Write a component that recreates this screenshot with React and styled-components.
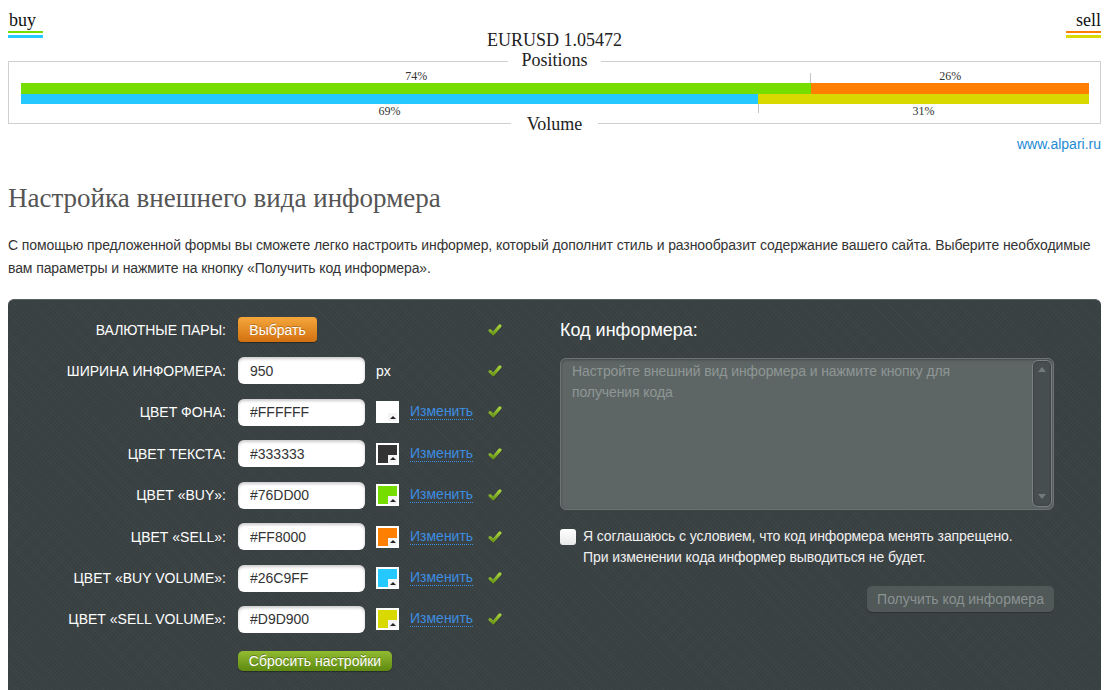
import React from 'react';
import styled, { createGlobalStyle } from 'styled-components';

const GlobalStyle = createGlobalStyle`
  html, body { margin: 0; padding: 0; background: #fff; overflow: hidden; }
  body { padding: 8px 5px 0 8px; font-family: "Liberation Sans", Arial, sans-serif; }
  * { box-sizing: border-box; }
`;

/* ---------- Informer preview ---------- */
const Header = styled.header`
  display: flex;
  justify-content: space-between;
  align-items: flex-start;
  padding-top: 2px;
`;
const Side = styled.div`
  width: 35px;
  display: flex;
  flex-direction: column;
  align-items: ${(p) => (p.$right ? 'flex-end' : 'flex-start')};
`;
const SideName = styled.span`
  font: 18px/21px "Liberation Serif", "Times New Roman", serif;
  color: #111;
  padding-left: ${(p) => (p.$right ? 0 : 1)}px;
`;
const Stripe = styled.div`
  align-self: stretch;
  height: ${(p) => p.$h}px;
  margin-top: ${(p) => p.$mt}px;
  background: ${(p) => p.$color};
`;
const Pair = styled.div`
  font: 18px/18px "Liberation Serif", "Times New Roman", serif;
  color: #222;
  margin-top: 21px;
`;

const Rule = styled.div`
  display: flex;
  height: 20px;
  font: 18px/20px "Liberation Serif", "Times New Roman", serif;
  color: #222;
`;
const RuleLine = styled.div`
  flex: 1;
  border: 0 solid #cfcfcf;
  ${(p) => (p.$right ? 'border-right-width: 1px;' : 'border-left-width: 1px;')}
  ${(p) =>
    p.$bottom
      ? 'align-self: flex-start; height: 10px; border-bottom-width: 1px;'
      : 'margin-top: 12px; border-top-width: 1px;'}
`;
const RuleText = styled.span`
  padding: ${(p) => (p.$bottom ? '0' : '1px')} ${(p) => p.$pad || 13}px 0;
`;
const FrameBody = styled.div`
  border-left: 1px solid #cfcfcf;
  border-right: 1px solid #cfcfcf;
  padding: 0 11px 0 12px;
`;
const BarRow = styled.div`
  display: flex;
`;
const Segment = styled.div`
  display: flex;
  flex-direction: column;
`;
const Pct = styled.div`
  height: ${(p) => p.$h}px;
  line-height: 14px;
  font-size: 12px;
  font-family: "Liberation Serif", "Times New Roman", serif;
  color: #333;
  text-align: center;
  white-space: nowrap;
  background: ${(p) =>
    p.$marker
      ? `linear-gradient(#c4c4c4, #c4c4c4) ${p.$marker} / 1px ${p.$mh}px no-repeat`
      : 'none'};
`;
const Bar = styled.div`
  height: ${(p) => p.$h}px;
  background: ${(p) => p.$color};
`;
const SiteLink = styled.a`
  display: block;
  margin-top: 2.5px;
  text-align: right;
  font: 14px/16px "Liberation Sans", Arial, sans-serif;
  color: #1d8ad2;
  text-decoration: none;
`;

/* ---------- Intro ---------- */
const Title = styled.h1`
  margin: 29.5px 0 0;
  font: normal 27px/32px "Liberation Serif", Georgia, serif;
  color: #555;
`;
const Intro = styled.p`
  margin: 20.5px 0 0;
  font: 14px/23px "Liberation Sans", Arial, sans-serif;
  letter-spacing: -0.1px;
  color: #333;
`;

/* ---------- Settings panel ---------- */
const Panel = styled.div`
  margin-top: 18.5px;
  display: flex;
  padding: 16.5px 46px 40px 0;
  border-top: 1px solid #5a6163;
  border-radius: 6px 6px 0 0;
  background-color: #3a4143;
  background-image: repeating-linear-gradient(45deg, rgba(255,255,255,0.018) 0 1px, transparent 1px 3px),
    repeating-linear-gradient(-45deg, rgba(0,0,0,0.03) 0 1px, transparent 1px 3px);
`;
const Form = styled.div`
  width: 552px;
  display: flex;
  flex-direction: column;
  gap: 14.43px;
`;
const Row = styled.div`
  display: grid;
  grid-template-columns: 219px 127px 23px 67px 14px;
  column-gap: 11px;
  align-items: center;
  height: 27px;
`;
const Label = styled.span`
  text-align: right;
  margin-right: 1px;
  font-size: 14px;
  color: #fff;
  white-space: nowrap;
`;
const OrangeButton = styled.button`
  justify-self: start;
  width: 79px;
  height: 25px;
  padding: 0;
  border: 0;
  border-radius: 4px;
  font: 14px "Liberation Sans", Arial, sans-serif;
  color: #fff;
  text-shadow: 0 -1px 0 rgba(0,0,0,0.25);
  background: linear-gradient(#f5a73c, #d2700f);
  box-shadow: 0 1px 1px rgba(0,0,0,0.35);
`;
const GreenButton = styled.button`
  grid-column: 2 / span 3;
  justify-self: start;
  width: 154px;
  height: 20px;
  padding: 0;
  border: 0;
  border-radius: 5px;
  font: 14px/20px "Liberation Sans", Arial, sans-serif;
  color: #fff;
  text-shadow: 0 -1px 0 rgba(0,0,0,0.3);
  background: linear-gradient(#93bb32, #5d8a10);
  box-shadow: 0 1px 1px rgba(0,0,0,0.35);
`;
const Field = styled.input`
  width: 127px;
  height: 27px;
  padding: 0 12px;
  border: 0;
  border-radius: 6px;
  font: 14px "Liberation Sans", Arial, sans-serif;
  color: #333;
  background: #fff;
  box-shadow: inset 0 2px 3px rgba(0,0,0,0.2);
  outline: none;
`;
const Unit = styled.span`
  font-size: 14px;
  color: #fff;
`;
const Swatch = styled.div`
  width: 23px;
  height: 22px;
  border: 2px solid #fff;
  background: ${(p) => p.$color};
  display: flex;
  align-items: flex-end;
  justify-content: flex-end;
`;
const SwatchCorner = styled.div`
  width: 9px;
  height: 8px;
  background: #f4f4f4;
  display: flex;
  align-items: center;
  justify-content: center;
  &::after {
    content: '';
    border-left: 3px solid transparent;
    border-right: 3px solid transparent;
    border-bottom: 3px solid #222;
  }
`;
const ChangeLink = styled.a`
  justify-self: start;
  font: 14px/15px "Liberation Sans", Arial, sans-serif;
  color: #3d8de0;
  text-decoration: none;
  border-bottom: 1px dotted #3d8de0;
`;
const CheckCell = styled.span`
  grid-column: 5;
  display: flex;
`;

const Code = styled.div`
  width: 494px;
  display: flex;
  flex-direction: column;
`;
const CodeTitle = styled.div`
  margin-top: 3px;
  font: 18px/22px "Liberation Sans", Arial, sans-serif;
  color: #fff;
`;
const CodeBox = styled.div`
  margin-top: 16.5px;
  height: 152px;
  display: flex;
  background: #5e6665;
  border: 1px solid #6c7473;
  border-radius: 6px;
  box-shadow: inset 0 1px 3px rgba(0,0,0,0.3);
`;
const CodeText = styled.div`
  flex: 1;
  padding: 2px 0 0 11px;
  font: 14px/21px "Liberation Sans", Arial, sans-serif;
  letter-spacing: -0.1px;
  color: #8e9695;
`;
const Scroll = styled.div`
  width: 20px;
  margin: 1px 1px 2px 0;
  border: 1px solid #7a8281;
  border-radius: 6px;
  background: #474e4f;
  box-shadow: inset 0 0 2px rgba(0,0,0,0.4);
  display: flex;
  flex-direction: column;
  justify-content: space-between;
  align-items: center;
  padding: 6px 0 7px;
`;
const Agree = styled.label`
  margin-top: 16.5px;
  display: flex;
  gap: 7px;
  font: 14px/21px "Liberation Sans", Arial, sans-serif;
  letter-spacing: -0.1px;
  color: #f0f0f0;
`;
const Box = styled.span`
  flex: none;
  width: 16px;
  height: 16px;
  margin-top: 2.5px;
  border-radius: 3px;
  background: linear-gradient(#fff, #e8e8e8);
`;
const GetButton = styled.button`
  align-self: flex-end;
  margin-top: 17.5px;
  width: 187px;
  height: 26px;
  padding: 0;
  border: 0;
  border-radius: 5px;
  font: 14px "Liberation Sans", Arial, sans-serif;
  color: #8a9292;
  background: #505858;
  box-shadow: 0 1px 1px rgba(0,0,0,0.25);
`;

const Check = () => (
  <svg width="15" height="14" viewBox="0 0 15 14">
    <defs>
      <linearGradient id="chk" x1="0" y1="0" x2="0" y2="1">
        <stop offset="0" stopColor="#a6d23c" />
        <stop offset="1" stopColor="#6c981b" />
      </linearGradient>
    </defs>
    <path d="M2.2 7.6 L5.6 11 L12.8 2.6" fill="none" stroke="#2b3122" strokeWidth="3.6" strokeLinecap="round" strokeLinejoin="round" opacity="0.35" transform="translate(0.5 0.8)" />
    <path d="M2.2 7.6 L5.6 11 L12.8 2.6" fill="none" stroke="url(#chk)" strokeWidth="3.4" strokeLinecap="round" strokeLinejoin="round" />
  </svg>
);

const Tri = ({ down }) => (
  <svg width="8" height="5" viewBox="0 0 8 5">
    <path d={down ? 'M0 0 H8 L4 5 Z' : 'M0 5 H8 L4 0 Z'} fill="#737b7a" />
  </svg>
);

const colors = [
  ['ЦВЕТ ФОНА:', '#FFFFFF'],
  ['ЦВЕТ ТЕКСТА:', '#333333'],
  ['ЦВЕТ «BUY»:', '#76DD00'],
  ['ЦВЕТ «SELL»:', '#FF8000'],
  ['ЦВЕТ «BUY VOLUME»:', '#26C9FF'],
  ['ЦВЕТ «SELL VOLUME»:', '#D9D900'],
];

export default function App() {
  const buy = 74;
  const buyVol = 69;
  return (
    <>
      <GlobalStyle />
      <Header>
        <Side>
          <SideName>buy</SideName>
          <Stripe $h={2} $mt={0} $color="#76DD00" />
          <Stripe $h={3} $mt={2} $color="#26C9FF" />
        </Side>
        <Pair>EURUSD 1.05472</Pair>
        <Side $right>
          <SideName $right>sell</SideName>
          <Stripe $h={2} $mt={0} $color="#FF8000" />
          <Stripe $h={3} $mt={2} $color="#D9D900" />
        </Side>
      </Header>

      <section>
        <Rule>
          <RuleLine />
          <RuleText>Positions</RuleText>
          <RuleLine $right />
        </Rule>
        <FrameBody>
          <BarRow>
            <Segment style={{ width: `${buy}%` }}>
              <Pct $h={14} $marker="right bottom" $mh={10}>{buy}%</Pct>
              <Bar $h={11} $color="#76DD00" />
            </Segment>
            <Segment style={{ width: `${100 - buy}%` }}>
              <Pct $h={14}>{100 - buy}%</Pct>
              <Bar $h={11} $color="#FF8000" />
            </Segment>
          </BarRow>
          <BarRow>
            <Segment style={{ width: `${buyVol}%` }}>
              <Bar $h={10} $color="#26C9FF" />
              <Pct $h={9.5}>{buyVol}%</Pct>
            </Segment>
            <Segment style={{ width: `${100 - buyVol}%` }}>
              <Bar $h={10} $color="#D9D900" />
              <Pct $h={9.5} $marker="left top" $mh={9}>{100 - buyVol}%</Pct>
            </Segment>
          </BarRow>
        </FrameBody>
        <Rule>
          <RuleLine $bottom />
          <RuleText $bottom $pad={16}>Volume</RuleText>
          <RuleLine $bottom $right />
        </Rule>
      </section>
      <SiteLink href="#">www.alpari.ru</SiteLink>

      <Title>Настройка внешнего вида информера</Title>
      <Intro>
        С помощью предложенной формы вы сможете легко настроить информер, который дополнит стиль и
        разнообразит содержание вашего сайта. Выберите необходимые вам параметры и нажмите на кнопку
        «Получить код информера».
      </Intro>

      <Panel>
        <Form>
          <Row>
            <Label>ВАЛЮТНЫЕ ПАРЫ:</Label>
            <OrangeButton>Выбрать</OrangeButton>
            <CheckCell><Check /></CheckCell>
          </Row>
          <Row>
            <Label>ШИРИНА ИНФОРМЕРА:</Label>
            <Field readOnly defaultValue="950" />
            <Unit>px</Unit>
            <CheckCell><Check /></CheckCell>
          </Row>
          {colors.map(([label, value]) => (
            <Row key={label}>
              <Label>{label}</Label>
              <Field readOnly defaultValue={value} />
              <Swatch $color={value}>
                <SwatchCorner />
              </Swatch>
              <ChangeLink href="#">Изменить</ChangeLink>
              <CheckCell><Check /></CheckCell>
            </Row>
          ))}
          <Row>
            <GreenButton>Сбросить настройки</GreenButton>
          </Row>
        </Form>

        <Code>
          <CodeTitle>Код информера:</CodeTitle>
          <CodeBox>
            <CodeText>
              Настройте внешний вид информера и нажмите кнопку для
              <br />
              получения кода
            </CodeText>
            <Scroll>
              <Tri />
              <Tri down />
            </Scroll>
          </CodeBox>
          <Agree>
            <Box />
            <span>
              Я соглашаюсь с условием, что код информера менять запрещено.
              <br />
              При изменении кода информер выводиться не будет.
            </span>
          </Agree>
          <GetButton>Получить код информера</GetButton>
        </Code>
      </Panel>
    </>
  );
}
